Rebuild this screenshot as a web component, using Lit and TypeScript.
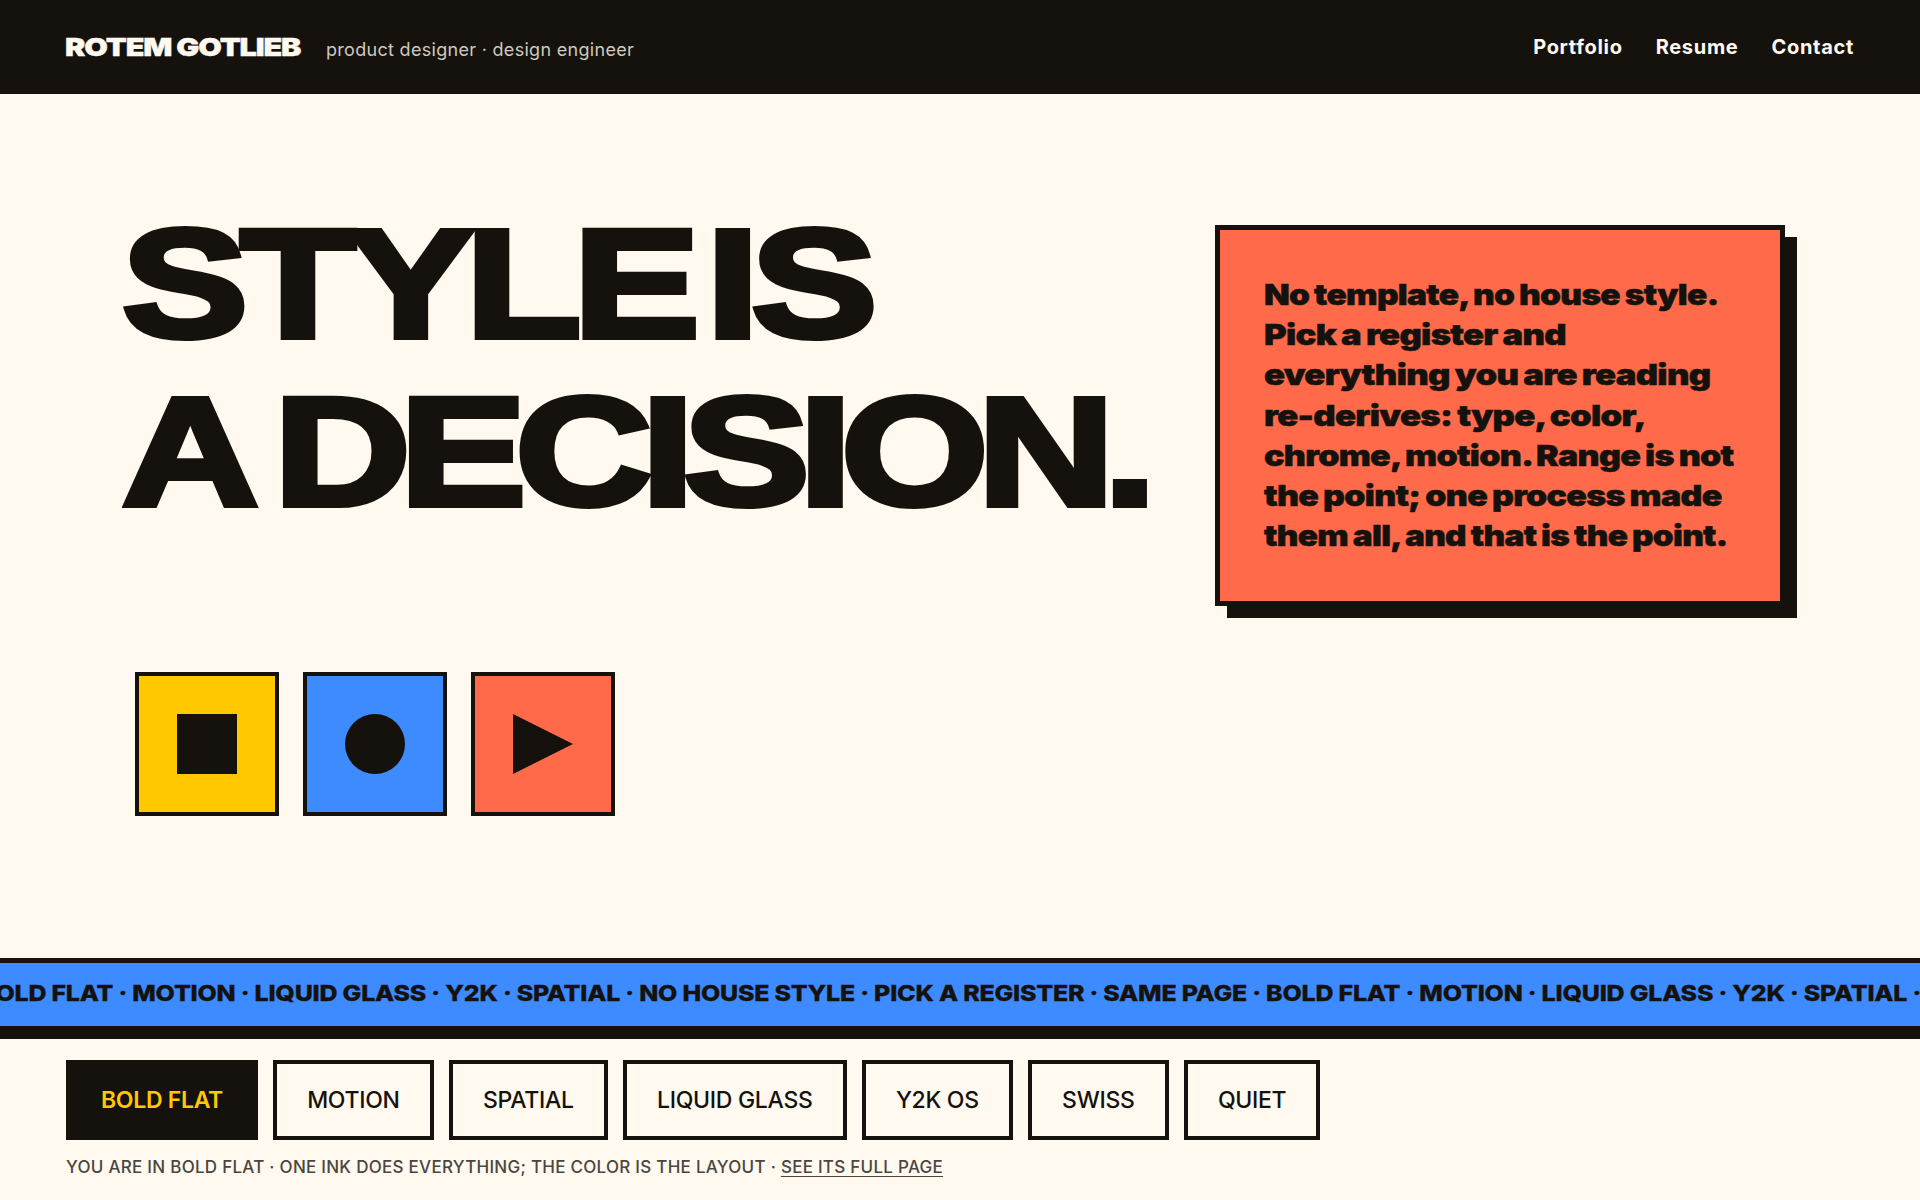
import { LitElement, html, css } from "lit";
import { customElement } from "lit/decorators.js";

@customElement("app-root")
export class AppRoot extends LitElement {
  static styles = css`
    :host { display: flex; flex-direction: column; height: 1200px; overflow: hidden; background: #fff9ef; color: #15120d; font-family: "Inter", sans-serif; }
    .w { display: inline-block; transform-origin: left center; white-space: nowrap; font-family: "Inter", sans-serif; font-weight: 900; }
    header { height: 94px; background: #15120d; color: #fff9ef; display: flex; align-items: center; justify-content: space-between; padding: 0 66px 0 65px; flex: none; }
    .left { display: flex; align-items: baseline; }
    .brand { width: 261px; font-size: 25px; letter-spacing: -0.9px; word-spacing: 0; transform: scaleX(1.22); -webkit-text-stroke: 0.4px #fff9ef; }
    .tag { font-size: 18px; color: #cfc9bf; letter-spacing: 0.3px; }
    nav { display: flex; gap: 33px; font-weight: 700; font-size: 20px; letter-spacing: 0.7px; }
    main { flex: 1; display: grid; grid-template-columns: 1093px 570px; padding: 106px 0 0 122px; align-content: start; }
    h1 { margin: 0; line-height: 168px; font-size: 154px; }
    h1 .w { display: block; font-family: "Liberation Sans", sans-serif; font-weight: 700; font-kerning: none; transform: scaleX(1.228); transform-origin: left; -webkit-text-stroke: 6px #15120d; }
    h1 .a { letter-spacing: -6.5px; word-spacing: -24px; }
    h1 .b { letter-spacing: -8.6px; word-spacing: -13px; }
    .card { margin-top: 25px; height: 381px; box-sizing: border-box; border: 5px solid #15120d; background: #ff6b4a; box-shadow: 12px 12px 0 #15120d; padding: 45px 44px; font-size: 29px; line-height: 40.2px; letter-spacing: -0.6px; word-spacing: -1px; }
    .card .w { display: block; -webkit-text-stroke: 0.5px #15120d; }
    .shapes { display: flex; gap: 24px; margin-left: 13px; padding-top: 66px; grid-column: 1 / 3; }
    .s { width: 144px; height: 144px; box-sizing: border-box; border: 4px solid #15120d; display: grid; place-items: center; }
    .marquee { flex: none; height: 81px; box-sizing: border-box; border-top: 5px solid #15120d; border-bottom: 13px solid #15120d; background: #3d8bff; overflow: hidden; display: flex; align-items: center; padding-bottom: 4px; }
    .marquee .w { font-size: 22px; margin-left: -21px; letter-spacing: -0.2px; font-weight: 800; transform: scaleX(1.136); -webkit-text-stroke: 0.3px #15120d; }
    .foot { flex: none; padding: 21px 66px 0; height: 161px; box-sizing: border-box; }
    .tabs { display: flex; gap: 15px; }
    .tab { height: 80px; box-sizing: border-box; border: 4px solid #15120d; padding: 0 30.2px; display: flex; align-items: center; font-weight: 500; font-size: 23px; letter-spacing: -0.3px; background: #fff9ef; }
    .tab.on { background: #15120d; color: #ffc800; font-weight: 600; padding: 0 31px; }
    .note { margin-top: 17px; font-size: 17px; font-weight: 500; color: #4a463f; letter-spacing: 0.27px; }
    .note u { text-underline-offset: 3px; }
  `;
  render() {
    const tabs = ["BOLD FLAT", "MOTION", "SPATIAL", "LIQUID GLASS", "Y2K OS", "SWISS", "QUIET"];
    const lines: [string, number][] = [
      ["No template, no house style.", 1.154],
      ["Pick a register and", 1.194],
      ["everything you are reading", 1.196],
      ["re-derives: type, color,", 1.197],
      ["chrome, motion. Range is not", 1.173],
      ["the point; one process made", 1.17],
      ["them all, and that is the point.", 1.149],
    ];
    return html`
      <header>
        <div class="left"><span class="w brand">ROTEM GOTLIEB</span><span class="tag">product designer · design engineer</span></div>
        <nav><span>Portfolio</span><span>Resume</span><span>Contact</span></nav>
      </header>
      <main>
        <h1><span class="w a">STYLE IS</span><span class="w b">A DECISION.</span></h1>
        <div class="card">${lines.map(([l, k]) => html`<span class="w" style="transform:scaleX(${k})">${l}</span>`)}</div>
        <div class="shapes">
          <div class="s" style="background:#ffc800"><svg width="60" height="60"><rect width="60" height="60" fill="#15120d"/></svg></div>
          <div class="s" style="background:#3d8bff"><svg width="60" height="60"><circle cx="30" cy="30" r="30" fill="#15120d"/></svg></div>
          <div class="s" style="background:#ff6b4a"><svg width="60" height="60"><polygon points="0,0 60,30 0,60" fill="#15120d"/></svg></div>
        </div>
      </main>
      <div class="marquee"><span class="w">BOLD FLAT · MOTION · LIQUID GLASS · Y2K · SPATIAL · NO HOUSE STYLE · PICK A REGISTER · SAME PAGE · BOLD FLAT · MOTION · LIQUID GLASS · Y2K · SPATIAL ·</span></div>
      <div class="foot">
        <div class="tabs">${tabs.map((t, i) => html`<div class="tab ${i === 0 ? "on" : ""}">${t}</div>`)}</div>
        <div class="note">YOU ARE IN BOLD FLAT · ONE INK DOES EVERYTHING; THE COLOR IS THE LAYOUT · <u>SEE ITS FULL PAGE</u></div>
      </div>
    `;
  }
}
